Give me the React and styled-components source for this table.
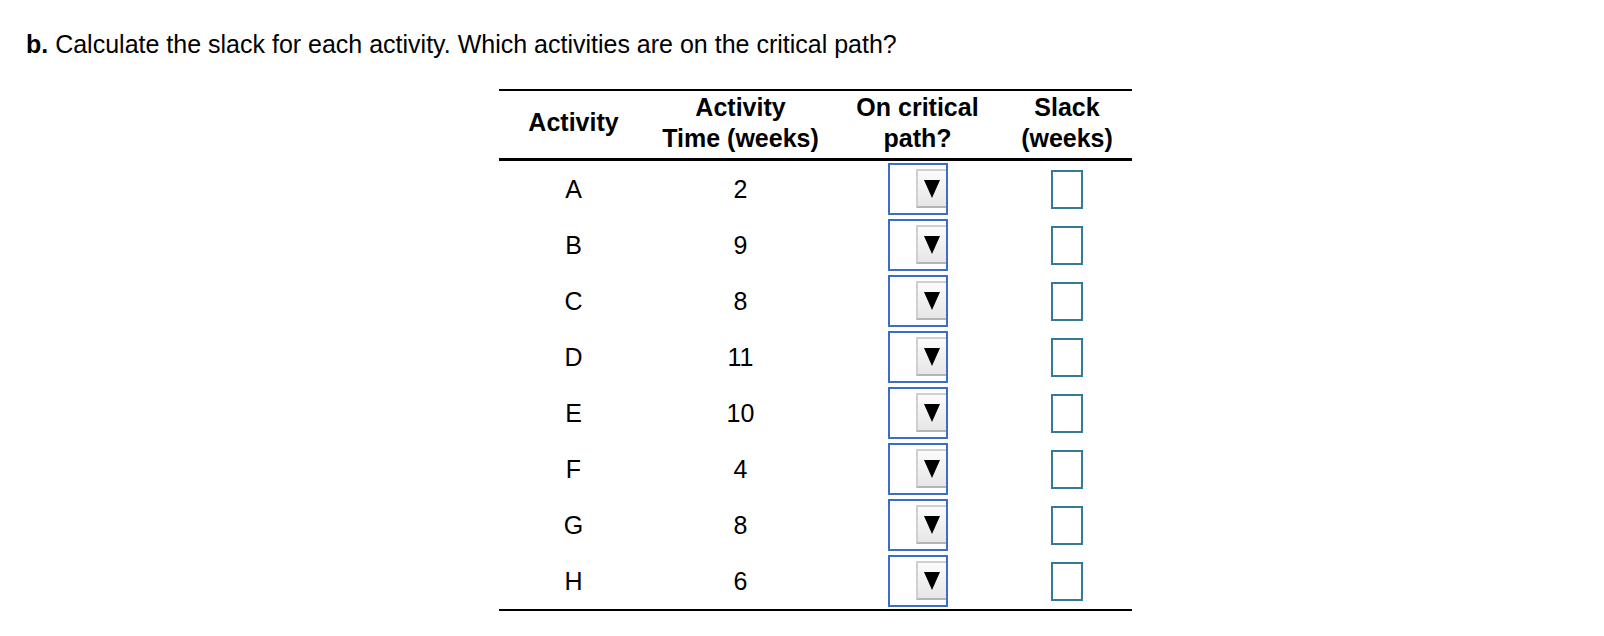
import React from 'react'
import styled, { createGlobalStyle } from 'styled-components'

const GlobalStyle = createGlobalStyle`
  html, body {
    margin: 0;
    padding: 0;
    background: #fff;
  }
  body {
    font-family: "Liberation Sans", Arial, Helvetica, sans-serif;
    color: #000;
  }
`

const Page = styled.div`
  width: 1604px;
  height: 636px;
  box-sizing: border-box;
  padding: 30px 0 0 26px;
`

const Question = styled.div`
  font-size: 25px;
  line-height: 29px;
  white-space: nowrap;
  b {
    font-weight: 700;
  }
`

const Table = styled.div`
  display: grid;
  grid-template-columns: 150px 184px 170px 129px;
  grid-template-rows: 70px;
  grid-auto-rows: 56px;
  width: 633px;
  margin: 30px auto 0;
  border-top: 2px solid #000;
  border-bottom: 2px solid #000;
`

const HeadCell = styled.div`
  display: flex;
  align-items: center;
  justify-content: center;
  text-align: center;
  box-sizing: border-box;
  border-bottom: 3px solid #000;
  padding-bottom: ${props => (props.$single ? '5px' : '3px')};
  font-size: 25px;
  font-weight: 700;
  line-height: 31px;
`

const Cell = styled.div`
  display: flex;
  align-items: center;
  justify-content: center;
  font-size: 25px;
`

const Dropdown = styled.div`
  width: 60px;
  height: 52px;
  box-sizing: border-box;
  border: 2px solid #3d6cc9;
  background: #fff;
  display: flex;
  justify-content: flex-end;
  align-items: center;
  padding-bottom: 1px;
`

const DropButton = styled.div`
  width: 30px;
  height: 39px;
  box-sizing: border-box;
  border: 2px solid #d0d0d0;
  border-right: none;
  border-bottom-color: #b4b4b4;
  background: linear-gradient(#fcfcfc, #e6e6e6);
  display: flex;
  align-items: center;
  justify-content: center;
  svg {
    width: 16px;
    height: 18px;
    margin-left: 1px;
  }
`

const SlackInput = styled.div`
  width: 32px;
  height: 39px;
  box-sizing: border-box;
  border: 2px solid #35799b;
  background: #fff;
`

const rows = [
  ['A', 2],
  ['B', 9],
  ['C', 8],
  ['D', 11],
  ['E', 10],
  ['F', 4],
  ['G', 8],
  ['H', 6]
]

const Arrow = () => (
  <svg viewBox="0 0 16 18">
    <polygon points="0,0 16,0 8,18" fill="#000" />
  </svg>
)

export default function App () {
  return (
    <Page>
      <GlobalStyle />
      <Question>
        <b>b.</b> Calculate the slack for each activity. Which activities are on the critical path?
      </Question>
      <Table>
        <HeadCell $single>Activity</HeadCell>
        <HeadCell>Activity<br />Time (weeks)</HeadCell>
        <HeadCell>On critical<br />path?</HeadCell>
        <HeadCell>Slack<br />(weeks)</HeadCell>
        {rows.map(([name, time]) => (
          <React.Fragment key={name}>
            <Cell>{name}</Cell>
            <Cell>{time}</Cell>
            <Cell>
              <Dropdown>
                <DropButton><Arrow /></DropButton>
              </Dropdown>
            </Cell>
            <Cell>
              <SlackInput />
            </Cell>
          </React.Fragment>
        ))}
      </Table>
    </Page>
  )
}
